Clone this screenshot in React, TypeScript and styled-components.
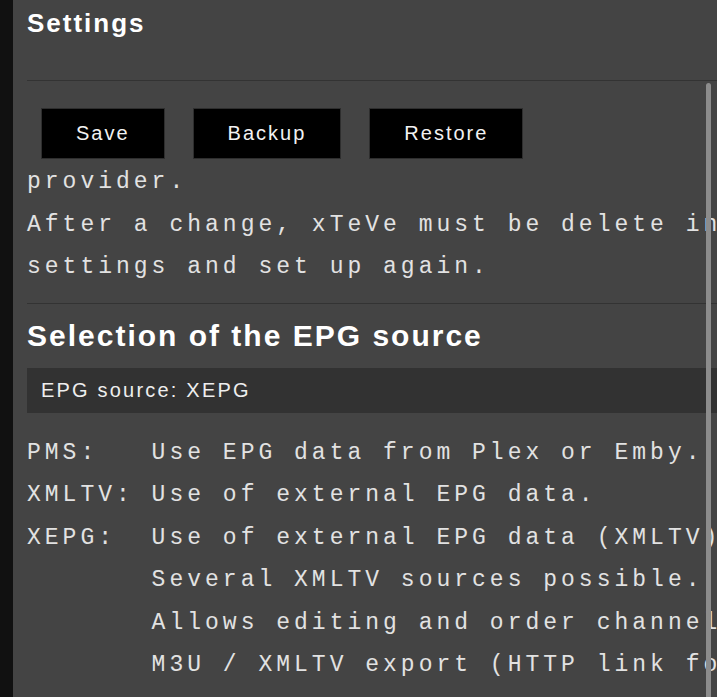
import React from "react";
import styled, { createGlobalStyle } from "styled-components";

const GlobalStyle = createGlobalStyle`
  html, body {
    margin: 0;
    padding: 0;
    background: #444444;
    overflow: hidden;
  }
  * { box-sizing: border-box; }
`;

const Page = styled.div`
  display: flex;
  height: 100vh;
  background: #444444;
`;

const Sidebar = styled.div`
  width: 13px;
  flex: none;
  background: #111111;
`;

const Main = styled.main`
  position: relative;
  flex: 1;
  min-width: 0;
  overflow: hidden;
  padding-left: 14px;
`;

const Header = styled.header`
  height: 81px;
  padding-top: 8px;
  border-bottom: 1px solid #333333;
`;

const Title = styled.h1`
  margin: 0;
  font-family: "Liberation Sans", Arial, sans-serif;
  font-weight: bold;
  font-size: 26px;
  letter-spacing: 2px;
  color: #ffffff;
  line-height: normal;
`;

const Toolbar = styled.div`
  display: flex;
  gap: 28px;
  padding: 27px 0 1px 14px;
`;

const Button = styled.button`
  background: #000000;
  color: #f2f2f2;
  border: 1px solid #2e2e2e;
  padding: 13px 34px;
  font-family: "Liberation Sans", Arial, sans-serif;
  font-size: 20px;
  line-height: 23px;
  letter-spacing: 2px;
  cursor: pointer;
`;

const Pre = styled.pre<{ $top?: number }>`
  margin: ${(p) => p.$top ?? 0}px 0 0;
  font-family: "Liberation Mono", "Courier New", monospace;
  font-size: 23px;
  letter-spacing: 4px;
  line-height: 42.5px;
  color: #e2e2e2;
  white-space: pre;
`;

const Divider = styled.hr`
  margin: 14px 0 0;
  border: 0;
  border-top: 1px solid #333333;
  height: 0;
`;

const SectionTitle = styled.h2`
  margin: 15px 0 0;
  font-family: "Liberation Sans", Arial, sans-serif;
  font-weight: bold;
  font-size: 30px;
  letter-spacing: 2px;
  color: #ffffff;
  line-height: normal;
`;

const InfoBar = styled.div`
  margin-top: 15px;
  height: 45px;
  display: flex;
  align-items: center;
  padding: 0 14px;
  background: #323232;
  font-family: "Liberation Sans", Arial, sans-serif;
  font-size: 20px;
  line-height: 23px;
  letter-spacing: 2.2px;
  color: #eeeeee;
  white-space: nowrap;
`;

const ScrollThumb = styled.div`
  position: absolute;
  top: 83px;
  right: 6px;
  width: 5px;
  height: 640px;
  border-radius: 3px;
  background: #8c8c8c;
`;

const tunerText = `provider.
After a change, xTeVe must be delete in the Plex / Emby DVR
settings and set up again.`;

const epgText = `PMS:   Use EPG data from Plex or Emby.
XMLTV: Use of external EPG data.
XEPG:  Use of external EPG data (XMLTV).
       Several XMLTV sources possible.
       Allows editing and order channels.
       M3U / XMLTV export (HTTP link for IPTV and XMLTV)`;

export default function App() {
  return (
    <>
      <GlobalStyle />
      <Page>
        <Sidebar />
        <Main>
          <Header>
            <Title>Settings</Title>
          </Header>
          <Toolbar>
            <Button>Save</Button>
            <Button>Backup</Button>
            <Button>Restore</Button>
          </Toolbar>
          <Pre $top={1}>{tunerText}</Pre>
          <Divider />
          <SectionTitle>Selection of the EPG source</SectionTitle>
          <InfoBar>EPG source: XEPG</InfoBar>
          <Pre $top={19}>{epgText}</Pre>
          <ScrollThumb />
        </Main>
      </Page>
    </>
  );
}
